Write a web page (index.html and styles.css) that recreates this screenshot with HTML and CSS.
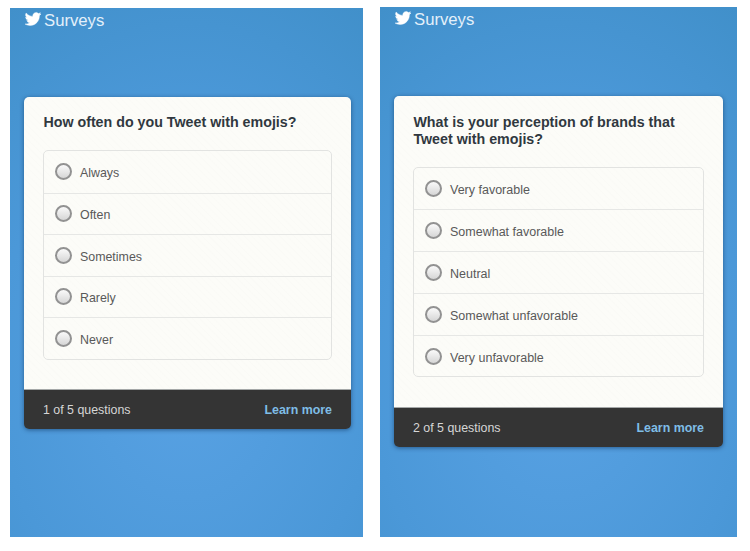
FILE: index.html
```
<!DOCTYPE html>
<html lang="en">
<head>
  <meta charset="UTF-8">
  <meta name="viewport" content="width=device-width, initial-scale=1.0">
  <title>Surveys</title>
  <link rel="stylesheet" href="styles.css">
</head>
<body>
  <div class="screens">
    <section class="screen">
      <header class="brand">
        <svg class="bird" viewBox="0 0 24 24" preserveAspectRatio="none"><path d="M23.95 4.57a10 10 0 0 1-2.82.77 4.96 4.96 0 0 0 2.16-2.72c-.95.55-2 .96-3.13 1.18a4.92 4.92 0 0 0-8.38 4.48A13.93 13.93 0 0 1 1.64 3.16a4.92 4.92 0 0 0 1.52 6.57 4.9 4.9 0 0 1-2.23-.61v.06a4.92 4.92 0 0 0 3.95 4.83 5 5 0 0 1-2.21.08 4.94 4.94 0 0 0 4.6 3.42A9.87 9.87 0 0 1 0 19.54a14 14 0 0 0 7.55 2.21c9.05 0 14-7.5 14-13.98 0-.21 0-.42-.02-.63a9.94 9.94 0 0 0 2.42-2.57z"/></svg>
        <span>Surveys</span>
      </header>
      <div class="card">
        <div class="card-body">
          <h2>How often do you Tweet with emojis?</h2>
          <ul class="options">
            <li><i class="radio"></i><span>Always</span></li>
            <li><i class="radio"></i><span>Often</span></li>
            <li><i class="radio"></i><span>Sometimes</span></li>
            <li><i class="radio"></i><span>Rarely</span></li>
            <li><i class="radio"></i><span>Never</span></li>
          </ul>
        </div>
        <footer class="card-footer">
          <span>1 of 5 questions</span>
          <a href="#">Learn more</a>
        </footer>
      </div>
    </section>

    <section class="screen screen-second">
      <header class="brand">
        <svg class="bird" viewBox="0 0 24 24" preserveAspectRatio="none"><path d="M23.95 4.57a10 10 0 0 1-2.82.77 4.96 4.96 0 0 0 2.16-2.72c-.95.55-2 .96-3.13 1.18a4.92 4.92 0 0 0-8.38 4.48A13.93 13.93 0 0 1 1.64 3.16a4.92 4.92 0 0 0 1.52 6.57 4.9 4.9 0 0 1-2.23-.61v.06a4.92 4.92 0 0 0 3.95 4.83 5 5 0 0 1-2.21.08 4.94 4.94 0 0 0 4.6 3.42A9.87 9.87 0 0 1 0 19.54a14 14 0 0 0 7.55 2.21c9.05 0 14-7.5 14-13.98 0-.21 0-.42-.02-.63a9.94 9.94 0 0 0 2.42-2.57z"/></svg>
        <span>Surveys</span>
      </header>
      <div class="card">
        <div class="card-body">
          <h2>What is your perception of brands that Tweet with emojis?</h2>
          <ul class="options">
            <li><i class="radio"></i><span>Very favorable</span></li>
            <li><i class="radio"></i><span>Somewhat favorable</span></li>
            <li><i class="radio"></i><span>Neutral</span></li>
            <li><i class="radio"></i><span>Somewhat unfavorable</span></li>
            <li><i class="radio"></i><span>Very unfavorable</span></li>
          </ul>
        </div>
        <footer class="card-footer">
          <span>2 of 5 questions</span>
          <a href="#">Learn more</a>
        </footer>
      </div>
    </section>
  </div>
</body>
</html>
```
FILE: styles.css
```
* {
  box-sizing: border-box;
}

body {
  margin: 0;
  background-color: #fff;
  font-family: "Liberation Sans", Arial, sans-serif;
  overflow: hidden;
}

.screens {
  display: flex;
  align-items: flex-end;
  gap: 17px;
  height: 537px;
  padding-left: 10px;
}

.screen {
  width: 353px;
  height: 529px;
  padding: 3px 12px 0 14px;
  background: radial-gradient(ellipse 320px 430px at 50% 68%, #59a2e4 0%, #4b98d8 60%, #4190ca 100%);
}

.screen-second {
  width: 357px;
  height: 530px;
}

/* Logo row */
.brand {
  display: flex;
  align-items: flex-start;
  gap: 3.5px;
  height: 86px;
  padding-left: 0.5px;
  color: #e3f0fa;
  font-size: 16.7px;
  line-height: 20px;
}

.bird {
  width: 16px;
  height: 16px;
  fill: #fff;
  stroke: #fff;
  stroke-width: 0.6;
}

/* Survey card */
.card {
  width: 327px;
  border-radius: 5px;
  overflow: hidden;
  box-shadow: 0 1px 4px rgba(0, 30, 70, 0.5);
}

.screen-second .card {
  width: 329px;
}

.card-body {
  height: 293px;
  padding: 17px 19px 0;
  background: repeating-linear-gradient(45deg, #fcfcf8 0, #fcfcf8 3px, #fafaf6 4px, #fcfcf8 5px);
  border-bottom: 1px solid #a5a8a8;
}

.screen-second .card-body {
  height: 312px;
}

h2 {
  margin: 0 0 19px;
  padding-left: 0.4px;
  color: #30383f;
  font-size: 14.25px;
  line-height: 17px;
}

.screen-second h2 {
  padding-top: 0.5px;
}

.options {
  list-style: none;
  margin: 0;
  padding: 0;
  border: 1px solid #e2e3e1;
  border-radius: 5px;
}

.options li {
  display: flex;
  align-items: center;
  gap: 8px;
  height: 41.5px;
  padding-left: 11px;
  color: #595959;
  font-size: 12.4px;
}

.screen-second .options li {
  height: 41.8px;
  font-size: 12.5px;
}

.options li + li {
  border-top: 1px solid #e6e7e5;
}

.options li span {
  padding-top: 3px;
}

.radio {
  width: 17px;
  height: 17px;
  border: 2px solid #929292;
  border-radius: 50%;
  background: linear-gradient(#fafafa, #d6d6d6);
}

.card-footer {
  display: flex;
  justify-content: space-between;
  align-items: center;
  height: 39px;
  padding: 1px 19px 0;
  background-color: #343434;
  color: #d6d6d6;
  font-size: 12.4px;
}

.card-footer a {
  color: #7fbde6;
  font-weight: bold;
  text-decoration: none;
}
```
